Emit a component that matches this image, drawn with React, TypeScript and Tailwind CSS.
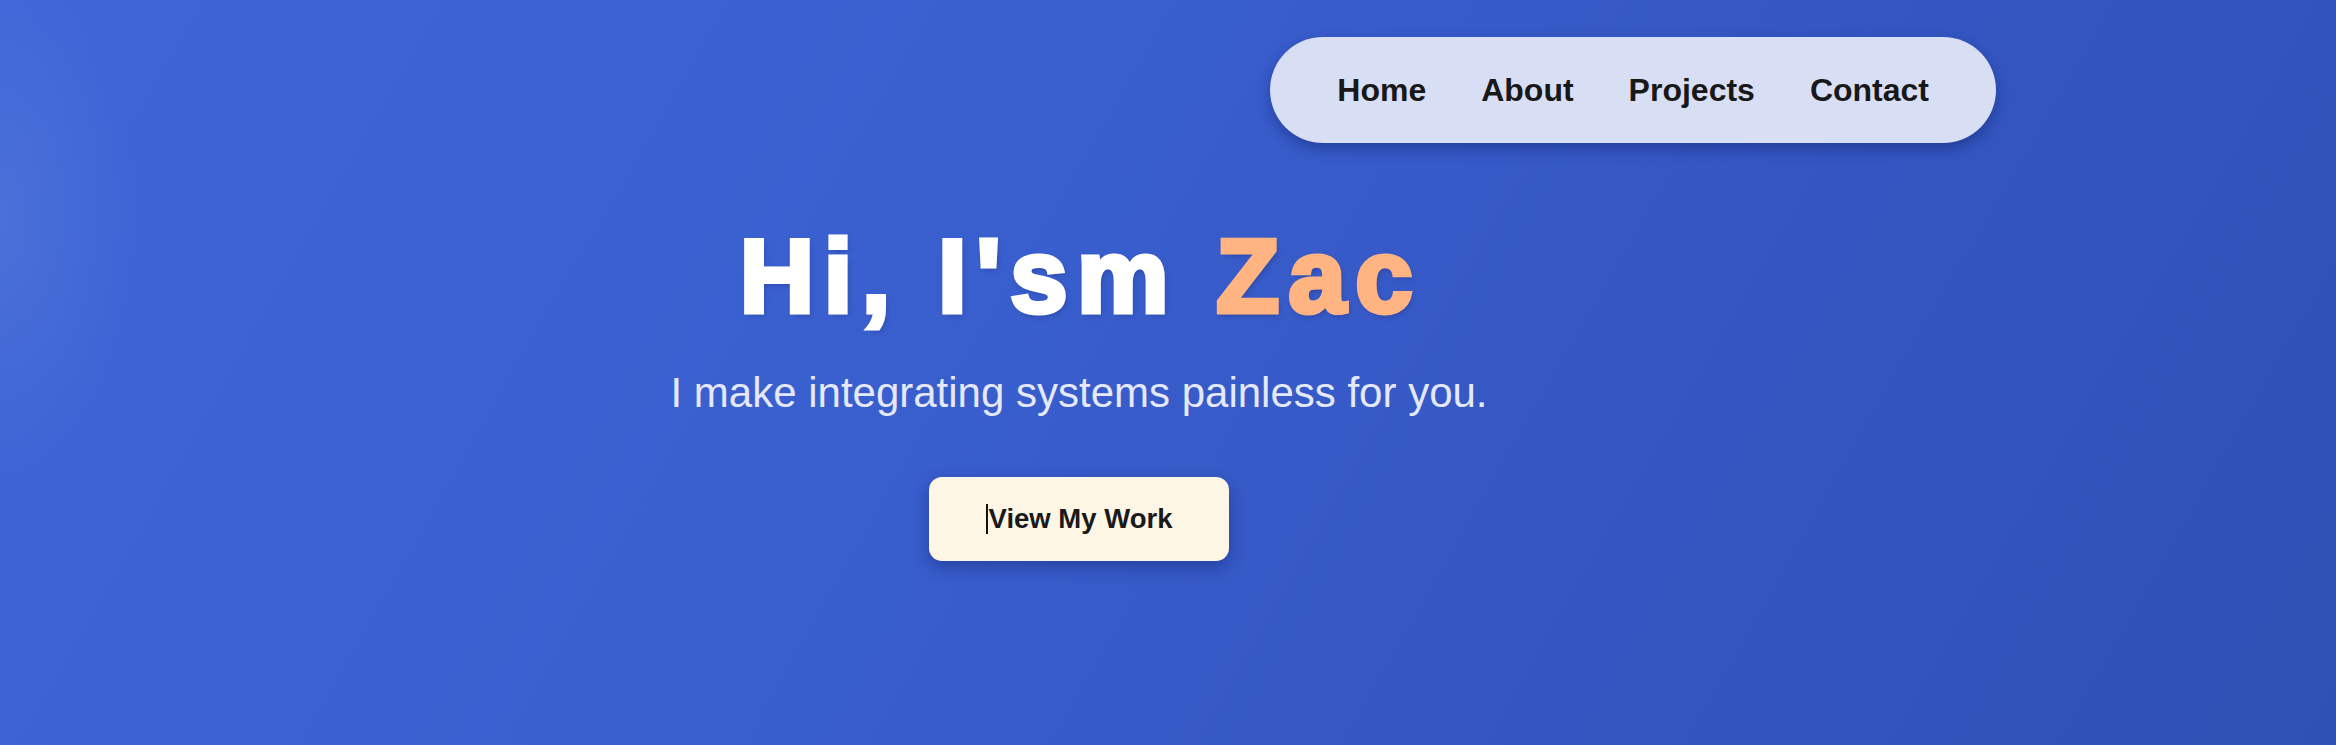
import React from "react";

export default function App() {
  return (
    <div
      className="relative h-[745px] w-full overflow-hidden"
      style={{
        background:
          "radial-gradient(ellipse 200px 380px at 0px 220px, rgba(255,255,255,0.07), rgba(255,255,255,0) 70%), linear-gradient(120deg, #3e66d7 0%, #3a60d0 35%, #3456c2 70%, #2f50b4 100%)",
        fontFamily: '"Liberation Sans", Arial, sans-serif',
      }}
    >
      <header className="flex justify-end pr-[340px] pt-[37px]">
        <nav className="flex h-[106px] items-center gap-[55px] rounded-full bg-[#d8def4] px-[67px] shadow-[0_6px_14px_rgba(10,20,80,0.35)]">
          {["Home", "About", "Projects", "Contact"].map((l) => (
            <a key={l} className="text-[32px] font-bold leading-none text-[#181818]">
              {l}
            </a>
          ))}
        </nav>
      </header>

      <main className="flex w-[2158px] flex-col items-center">
        <h1 className="mt-[74px] pl-[4px] text-[103px] font-bold leading-[120px] tracking-[9.5px] text-white [-webkit-text-stroke:5px_currentColor] [text-shadow:2px_3px_6px_rgba(0,0,30,0.25)]">
          Hi, I'sm <span className="text-[#ffb482]">Zac</span>
        </h1>
        <p className="mt-[31px] text-[42px] leading-[50px] text-[#e4e8f8]">
          I make integrating systems painless for you.
        </p>
        <button className="mt-[59px] flex h-[84px] w-[300px] items-center justify-center rounded-[13px] bg-[#fdf6e4] shadow-[0_6px_16px_rgba(10,20,80,0.35)]">
          <span className="mr-[1px] inline-block h-[30px] w-[2px] bg-[#111]" />
          <span className="text-[27.5px] font-bold text-[#1a1a1a]">View My Work</span>
        </button>
      </main>
    </div>
  );
}
